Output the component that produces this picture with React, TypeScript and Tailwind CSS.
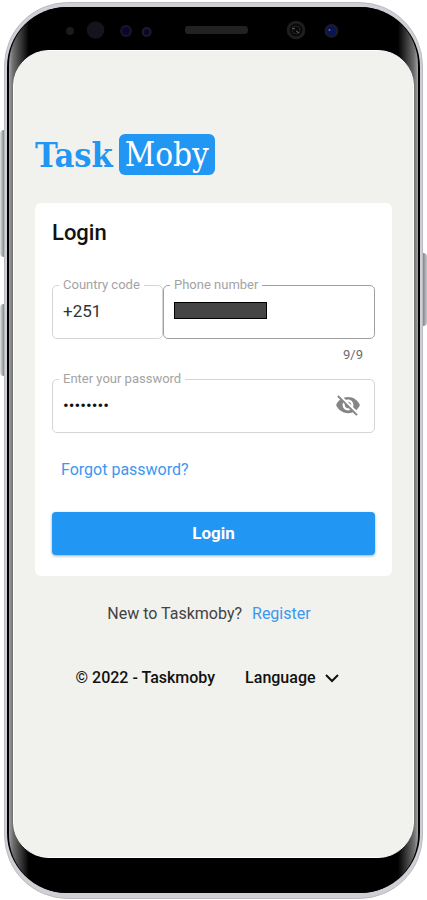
import React, { useState } from 'react';
import { MdVisibilityOff, MdVisibility } from 'react-icons/md';

interface OutlinedFieldProps {
  id: string;
  label: string;
  className?: string;
  children: React.ReactNode;
}

const OutlinedField: React.FC<OutlinedFieldProps> = ({ id, label, className = '', children }) => (
  <fieldset className={`min-w-0 rounded-[5px] border px-[6px] ${className}`}>
    <legend className="h-4 px-1 text-[13px] leading-4 text-[#a3a3a3]">
      <label htmlFor={id}>{label}</label>
    </legend>
    <div className="flex h-[45px] items-start px-1">{children}</div>
  </fieldset>
);

const Sensors = () => (
  <svg className="h-[43px] w-full" viewBox="0 0 408 43" fill="none" aria-hidden="true">
    <circle cx="58" cy="24" r="4" fill="#1b1b1e" />
    <circle cx="84" cy="23" r="9" fill="#15141b" />
    <circle cx="115" cy="24" r="5" fill="#08082e" stroke="#17172c" strokeWidth="2" />
    <circle cx="136" cy="25" r="4" fill="#08082a" stroke="#1c1c2e" strokeWidth="2" />
    <rect x="175" y="19" width="64" height="8" rx="3" fill="#222222" />
    <circle cx="288" cy="23" r="8" fill="#090909" stroke="#1e1e1e" strokeWidth="3" />
    <circle cx="288" cy="23" r="4" stroke="#262626" />
    <path d="M284 21l3 1M288 24l3 2" stroke="#666666" />
    <circle cx="324" cy="24" r="6" fill="#0b1550" stroke="#1b1c2b" strokeWidth="2" />
    <circle cx="322" cy="23" r="1" fill="#5c6fae" />
  </svg>
);

const Logo = () => (
  <div className="flex items-center gap-[6px] font-['DejaVu_Serif_Condensed','DejaVu_Serif',serif] text-[#2196f3]">
    <span className="text-[34px] leading-10 font-bold">Task</span>
    <span className="rounded-md bg-[#2196f3] px-[6px] text-[33px] leading-[41px] text-white">Moby</span>
  </div>
);

const LoginCard = () => {
  const [password, setPassword] = useState('password');
  const [showPassword, setShowPassword] = useState(false);

  return (
    <form
      className="mt-7 rounded-md bg-white px-[17px] pt-4 pb-[21px]"
      onSubmit={(e) => e.preventDefault()}
    >
      <h1 className="text-[22px] leading-7 font-medium text-[#111111]">Login</h1>

      <div className="mt-[30px] flex">
        <OutlinedField id="country" label="Country code" className="w-[111px] border-[#d5d5d5]">
          <input
            id="country"
            type="text"
            defaultValue="+251"
            className="mt-2 w-full text-[17px] leading-5 text-[#333333] outline-none"
          />
        </OutlinedField>
        <OutlinedField id="phone" label="Phone number" className="flex-1 border-[#a0a0a0]">
          <span className="mt-[9px] h-[17px] w-[93px] shrink-0 border border-black bg-[#454545]" />
          <input id="phone" type="tel" className="mt-2 w-full min-w-0 text-[17px] leading-5 outline-none" />
        </OutlinedField>
      </div>

      <p className="mt-2 pr-3 text-right text-[13px] leading-4 text-[#6b6b6b]">9/9</p>

      <div className="mt-2">
        <OutlinedField id="password" label="Enter your password" className="border-[#d5d5d5]">
          <input
            id="password"
            type={showPassword ? 'text' : 'password'}
            value={password}
            onChange={(e) => setPassword(e.target.value)}
            className="mt-2 w-full min-w-0 text-[17px] leading-5 text-[#111111] outline-none"
          />
          <button
            type="button"
            aria-label="Toggle password visibility"
            onClick={() => setShowPassword(!showPassword)}
            className="mt-[5px] mr-[3px] text-[#858585]"
          >
            {showPassword ? <MdVisibility className="size-[26px]" /> : <MdVisibilityOff className="size-[26px]" />}
          </button>
        </OutlinedField>
      </div>

      <a href="#forgot" className="mt-[27px] ml-[9px] inline-block text-base leading-5 text-[#3b97f0]">
        Forgot password?
      </a>

      <button
        type="submit"
        className="mt-[30px] h-[43px] w-full rounded-[4px] bg-[#2196f3] text-[17px] font-bold text-white shadow-[0_1px_3px_rgba(0,0,0,0.35)]"
      >
        Login
      </button>
    </form>
  );
};

export default function App() {
  return (
    <div className="relative flex min-h-screen bg-white pt-[2px] pr-1 pb-px pl-1 font-[Roboto,sans-serif]">
      {/* side keys */}
      <div className="absolute top-[130px] left-0 h-[127px] w-1 rounded-l-sm bg-linear-to-r from-[#e2e4e6] to-[#85888b]" />
      <div className="absolute top-[304px] left-0 h-[72px] w-1 rounded-l-sm bg-linear-to-r from-[#e2e4e6] to-[#85888b]" />
      <div className="absolute top-[253px] right-0 h-[73px] w-1 rounded-r-sm bg-linear-to-r from-[#85888b] to-[#c5c7c9]" />

      <div className="flex flex-1 rounded-[64px] border border-[#b9bbc0] bg-[#cfd0d6] px-[2px] pt-1 pb-[5px]">
        <div className="flex flex-1 rounded-[60px] bg-black px-[2px]">
          <div className="flex flex-1 flex-col rounded-[58px] bg-[linear-gradient(to_right,#a3a3a3,#6e6e6e_4px,#000_20px,#000_calc(100%-20px),#6e6e6e_calc(100%-4px),#a3a3a3)] px-1 pb-[35px]">
            <Sensors />
            <main className="flex-1 rounded-[36px] border border-white bg-[#f1f2ed] px-[21px] pt-[83px]">
              <Logo />
              <LoginCard />

              <p className="mt-7 flex justify-center gap-[10px] pr-[9px] text-base leading-5 text-[#424242]">
                New to Taskmoby?
                <a href="#register" className="text-[#3b97f0]">
                  Register
                </a>
              </p>

              <footer className="mt-11 flex items-center justify-center gap-[30px] pr-3 text-base leading-5 font-medium text-[#111111]">
                <span>© 2022 - Taskmoby</span>
                <button type="button" className="flex items-center gap-2">
                  Language
                  <svg className="size-4" viewBox="0 0 16 16" fill="none" stroke="currentColor" strokeWidth="2" aria-hidden="true">
                    <path d="M2 5l6 6 6-6" />
                  </svg>
                </button>
              </footer>
            </main>
          </div>
        </div>
      </div>
    </div>
  );
}
